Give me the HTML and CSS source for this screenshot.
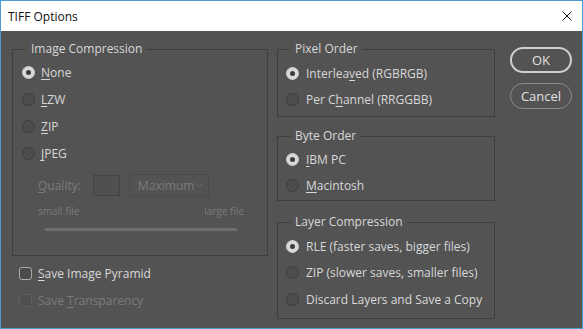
FILE: index.html
```html
<!DOCTYPE html>
<html lang="en">
<head>
  <meta charset="UTF-8" />
  <title>TIFF Options</title>
  <link rel="stylesheet" href="styles.css">
</head>
<body>
  <div class="window">
    <div class="titlebar">
      <span class="title">TIFF Options</span>
      <svg class="close" width="10" height="10" viewBox="0 0 10 10">
        <path d="M0.5 0.5 L9.5 9.5 M9.5 0.5 L0.5 9.5" stroke="#111" stroke-width="1" fill="none" />
      </svg>
    </div>

    <div class="content">
      <div class="col-left">
        <fieldset class="group group-image">
          <legend>Image Compression</legend>
          <div class="row"><span class="radio checked"></span><span><u>N</u>one</span></div>
          <div class="row"><span class="radio"></span><span><u>L</u>ZW</span></div>
          <div class="row"><span class="radio"></span><span><u>Z</u>IP</span></div>
          <div class="row"><span class="radio"></span><span><u>J</u>PEG</span></div>

          <div class="quality disabled">
            <span class="quality-label"><u>Q</u>uality:</span>
            <span class="quality-box"></span>
            <span class="select">Maximum
              <svg width="7" height="4" viewBox="0 0 7 4"><path d="M0.5 0.5 L3.5 3.5 L6.5 0.5" stroke="#6c6c6c" fill="none" /></svg>
            </span>
          </div>
          <div class="scale-labels disabled">
            <span>small file</span>
            <span>large file</span>
          </div>
          <div class="track"></div>
        </fieldset>

        <div class="row check-row"><span class="checkbox"></span><span><u>S</u>ave Image Pyramid</span></div>
        <div class="row check-row disabled"><span class="checkbox off"></span><span>Save <u>T</u>ransparency</span></div>
      </div>

      <div class="col-right">
        <fieldset class="group group-pixel">
          <legend>Pixel Order</legend>
          <div class="row"><span class="radio checked"></span><span>Interlea<u>v</u>ed (RGBRGB)</span></div>
          <div class="row"><span class="radio"></span><span>Per C<u>h</u>annel (RRGGBB)</span></div>
        </fieldset>

        <fieldset class="group group-byte">
          <legend>Byte Order</legend>
          <div class="row"><span class="radio checked"></span><span><u>I</u>BM PC</span></div>
          <div class="row"><span class="radio"></span><span><u>M</u>acintosh</span></div>
        </fieldset>

        <fieldset class="group group-layer">
          <legend>Layer Compression</legend>
          <div class="row"><span class="radio checked"></span><span>RLE (faster saves, bigger files)</span></div>
          <div class="row"><span class="radio"></span><span>ZIP (slower saves, smaller files)</span></div>
          <div class="row"><span class="radio"></span><span>Discard Layers and Save a Copy</span></div>
        </fieldset>
      </div>

      <div class="col-buttons">
        <button class="btn btn-default">OK</button>
        <button class="btn">Cancel</button>
      </div>
    </div>
  </div>
</body>
</html>
```

FILE: styles.css
```css
body {
  margin: 0;
  font-family: 'Open Sans', 'Noto Sans', sans-serif;
  font-size: 12px;
}

.window {
  width: 581px;
  height: 328px;
  border: 1px solid #4d9bd5;
  border-top: 0;
  background: #535353;
  display: flex;
  flex-direction: column;
}

.titlebar {
  height: 31px;
  background: #ffffff;
  display: flex;
  align-items: center;
  justify-content: space-between;
  padding: 0 10px 0 7px;
  border-top: 1px solid #4d9bd5;
  box-sizing: border-box;
}

.title {
  color: #111;
  font-size: 12px;
}

.content {
  display: flex;
  padding: 10px 0 0 11px;
  color: #d8d8d8;
}

.col-left {
  width: 256px;
  display: flex;
  flex-direction: column;
}

.col-right {
  width: 218px;
  margin-left: 9px;
  display: flex;
  flex-direction: column;
}

.col-buttons {
  width: 62px;
  margin-left: 15px;
  padding-top: 6px;
  display: flex;
  flex-direction: column;
  gap: 10px;
}

.group {
  margin: 0;
  padding: 3px 8px 4px 8px;
  border: 1px solid #3e3e3e;
  min-width: 0;
}

.group legend {
  margin-left: 5px;
  padding: 0 4px;
  line-height: 16px;
  color: #d8d8d8;
}

.group-byte {
  margin-top: 11px;
  padding-top: 2px;
  padding-bottom: 2px;
}

.group-layer {
  margin-top: 13px;
  padding-top: 3px;
  padding-bottom: 5px;
}

.row {
  display: flex;
  align-items: center;
  gap: 7px;
  height: 26px;
  white-space: nowrap;
}

.group-layer .row + .row {
  height: 27px;
}

.group-image {
  padding: 2px 8px 24px 9px;
}

.group-image .row {
  height: 27px;
  gap: 6px;
}

u {
  text-decoration-thickness: 1px;
  text-underline-offset: 2px;
}

.radio {
  width: 13px;
  height: 13px;
  border-radius: 50%;
  box-sizing: border-box;
  border: 1px solid #3c3c3c;
  background: #4d4d4d;
  flex: none;
  display: flex;
  align-items: center;
  justify-content: center;
}

.radio.checked {
  background: #d9d9d9;
  border-color: #cfcfcf;
}

.radio.checked::after {
  content: "";
  width: 5px;
  height: 5px;
  border-radius: 50%;
  background: #3c3c3c;
}

.disabled {
  color: #7b7b7b;
}

.quality {
  display: flex;
  align-items: center;
  margin-top: 6px;
  padding-left: 16px;
  height: 24px;
}

.quality-label {
  width: 55px;
}

.quality-box {
  width: 27px;
  height: 21px;
  box-sizing: border-box;
  border: 1px solid #444;
  background: #505050;
}

.select {
  margin-left: 9px;
  width: 80px;
  height: 23px;
  box-sizing: border-box;
  border: 1px solid #4a4a4a;
  display: flex;
  align-items: center;
  justify-content: space-between;
  padding: 0 5px 0 8px;
}

.scale-labels {
  display: flex;
  justify-content: space-between;
  font-size: 10px;
  line-height: 12px;
  margin: 8px 15px 0 16px;
}

.track {
  height: 3px;
  background: #6e6e6e;
  margin: 11px 22px 0 23px;
}

.check-row {
  margin-top: 4px;
  padding-left: 7px;
  height: 27px;
  gap: 6px;
}

.check-row + .check-row {
  margin-top: 0;
}

.checkbox {
  width: 13px;
  height: 13px;
  box-sizing: border-box;
  border: 1px solid #a9a9a9;
  border-radius: 3px;
  background: #4b4b4b;
  flex: none;
}

.checkbox.off {
  border-color: #5f5f5f;
  background: #4f4f4f;
}

.btn {
  height: 26px;
  border-radius: 13px;
  background: transparent;
  border: 1px solid #8a8a8a;
  color: #e2e2e2;
  font-family: inherit;
  font-size: 13px;
  padding: 0;
}

.btn-default {
  border: 2px solid #cfcfcf;
}
```
